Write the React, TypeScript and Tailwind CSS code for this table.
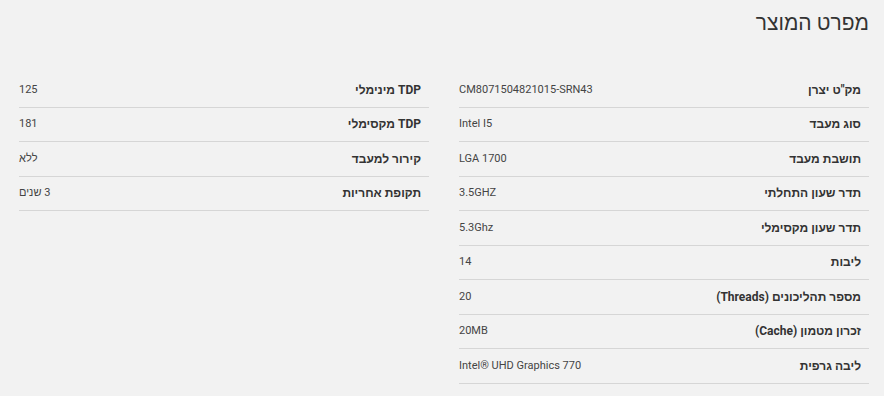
import React from 'react';

type Spec = { label: string; value: string };

const mainSpecs: Spec[] = [
  { label: 'מק"ט יצרן', value: 'CM8071504821015-SRN43' },
  { label: 'סוג מעבד', value: 'Intel I5' },
  { label: 'תושבת מעבד', value: 'LGA 1700' },
  { label: 'תדר שעון התחלתי', value: '3.5GHZ' },
  { label: 'תדר שעון מקסימלי', value: '5.3Ghz' },
  { label: 'ליבות', value: '14' },
  { label: 'מספר תהליכונים (Threads)', value: '20' },
  { label: 'זכרון מטמון (Cache)', value: '20MB' },
  { label: 'ליבה גרפית', value: 'Intel® UHD Graphics 770' },
];

const extraSpecs: Spec[] = [
  { label: 'TDP מינימלי', value: '125' },
  { label: 'TDP מקסימלי', value: '181' },
  { label: 'קירור למעבד', value: 'ללא' },
  { label: 'תקופת אחריות', value: '3 שנים' },
];

const SpecRow: React.FC<Spec> = ({ label, value }) => (
  <div className="flex h-[34.5px] items-center justify-between border-b border-[#d6d6d6]">
    <span className="pr-2 text-[12px] font-bold text-[#333]">{label}</span>
    <span className="text-[11px] text-[#444]">{value}</span>
  </div>
);

export default function App() {
  return (
    <div
      dir="rtl"
      className="min-h-[396px] bg-[#f2f2f2] pl-[19px] pr-[15px] pt-[8px]"
      style={{ fontFamily: 'Roboto, "Liberation Sans", Arial, sans-serif' }}
    >
      <h2 className="text-[21px] font-normal leading-[30px] text-[#333]">מפרט המוצר</h2>

      <div className="mt-[35px] grid grid-cols-2 gap-x-[30px]">
        <div>
          {mainSpecs.map((s) => (
            <SpecRow key={s.label} {...s} />
          ))}
        </div>
        <div>
          {extraSpecs.map((s) => (
            <SpecRow key={s.label} {...s} />
          ))}
        </div>
      </div>
    </div>
  );
}
